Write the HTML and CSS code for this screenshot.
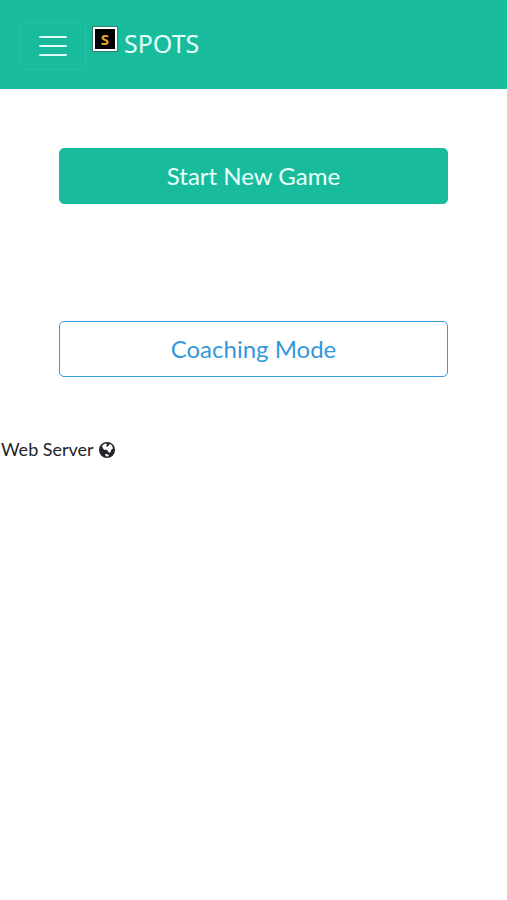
FILE: index.html
```html
<!DOCTYPE html>
<html lang="en">
<head>
<meta charset="utf-8">
<meta name="viewport" content="width=device-width, initial-scale=1">
<title>SPOTS</title>
<link rel="stylesheet" href="styles.css">
</head>
<body>
<header class="navbar">
  <button class="toggler" type="button" aria-label="Toggle navigation">
    <svg class="toggler-icon" viewBox="0 0 36 38" aria-hidden="true"><path d="M5 10h26M5 19h26M5 28h26"/></svg>
  </button>
  <a class="brand" href="#"><span class="logo" aria-hidden="true">S</span><span>SPOTS</span></a>
</header>
<main>
  <div class="actions">
    <button class="btn btn-primary" type="button">Start New Game</button>
    <button class="btn btn-outline" type="button">Coaching Mode</button>
  </div>
  <p class="server">Web Server
    <svg class="globe" viewBox="0 0 16 16" aria-hidden="true"><circle cx="8" cy="8" r="8"/><path d="M3 4 5 2l2.500-.5.5 1.500-1 1 1.500 1 1-1.500L11 2l2 1.500 1 3-1.500 1-1 2.500-1.500 1-1-2-2-1.500-1.500.5L4 6.500z"/><path d="m6 12 2.500.3 1.500 1.200-1.500 1.200-2-1z"/></svg>
  </p>
</main>
</body>
</html>
```
FILE: styles.css
```css
* { box-sizing: border-box; }
body { margin: 0; background: #fff; color: #212529; font-family: Lato, sans-serif; font-size: 18px; line-height: 28px; }
.navbar { display: flex; align-items: center; gap: 7px; padding: 22px 20px 19px; background: #18bc9c; }
.toggler { display: flex; padding: 4px 14px; border: 1px solid #2abf9f; border-radius: 5px; background: none; }
.toggler-icon { width: 36px; height: 38px; fill: none; stroke: #e3fffa; stroke-width: 2; stroke-linecap: round; }
.brand { display: flex; align-items: center; gap: 7px; padding-bottom: 7px; color: #e3fffa; font-family: "Noto Sans", sans-serif; font-size: 25px; text-decoration: none; }
.logo { display: grid; place-items: center; width: 24px; height: 24px; margin-bottom: 8px; border: 2px solid #fff; outline: 1px solid #397f70; background: #000; color: #e3a52c; font-size: 15px; font-weight: 700; line-height: 20px; }
.actions { display: grid; gap: 117px; padding: 59px 59px 58px; }
.btn { height: 56px; padding: 0; border: 1px solid; border-radius: 5px; font: 24px/36px Lato, sans-serif; }
.btn-primary { border-color: #18bc9c; background: #18bc9c; color: #e9fffb; }
.btn-outline { border-color: #3498db; background: #fff; color: #3498db; }
.server { margin: 0; padding-left: 1px; }
.globe { width: 16px; height: 16px; margin-left: 1px; vertical-align: -2px; fill: #212529; }
.globe path { fill: #fff; }
```
